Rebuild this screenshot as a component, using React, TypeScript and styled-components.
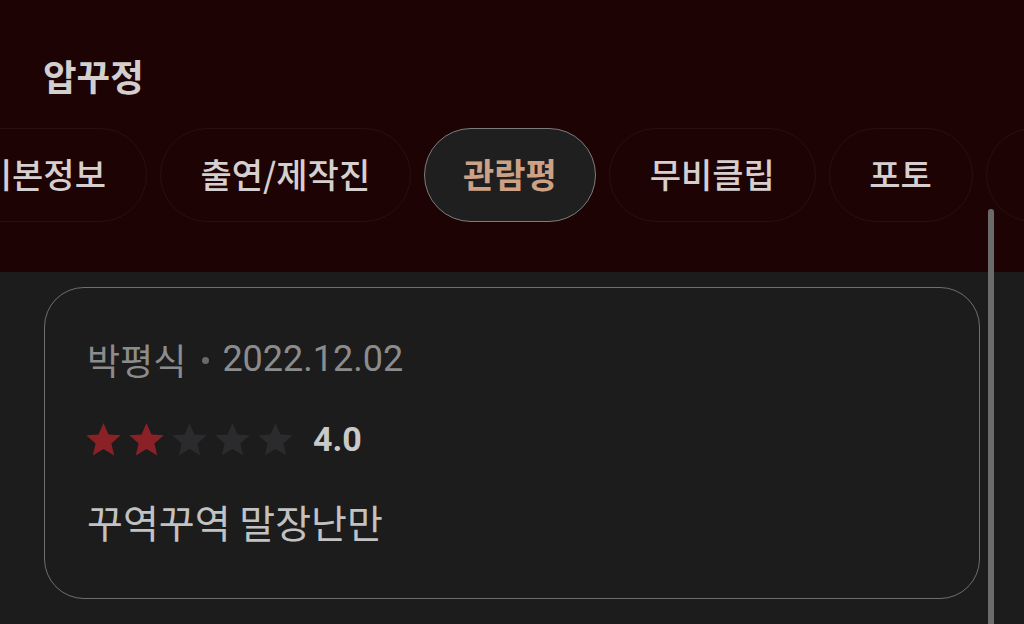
import styled, { createGlobalStyle } from 'styled-components'

const GlobalStyle = createGlobalStyle`
  html, body {
    margin: 0;
    padding: 0;
    background: #1c1c1c;
    overflow: hidden;
  }
  body {
    font-family: Roboto, 'Noto Sans CJK KR', sans-serif;
  }
`

const Page = styled.div({
  position: 'relative',
  width: '1024px',
  height: '624px',
  overflow: 'hidden',
  background: '#1c1c1c',
})

const Header = styled.div({
  background: '#1d0303',
  padding: '54px 0 50px',
  display: 'flex',
  flexDirection: 'column',
  gap: '31px',
})

const Title = styled.div({
  paddingLeft: '43px',
  fontSize: '36.5px',
  lineHeight: '43px',
  fontWeight: 700,
  color: '#d3cfcf',
  fontFamily: "'Noto Sans CJK KR', sans-serif",
})

const TabStrip = styled.div({
  display: 'flex',
  gap: '13px',
  marginLeft: '-60px',
  whiteSpace: 'nowrap',
})

const Tab = styled.div<{ $active?: boolean }>(({ $active }) => ({
  flex: 'none',
  height: '94px',
  boxSizing: 'border-box',
  padding: $active ? '0 38px 3px' : '0 39.8px 3px',
  borderRadius: '47px',
  display: 'flex',
  alignItems: 'center',
  fontSize: '34px',
  fontWeight: $active ? 700 : 500,
  fontFamily: "'Noto Sans CJK KR', sans-serif",
  color: $active ? '#cca185' : '#d6cfcf',
  background: $active ? '#1f1f1f' : 'transparent',
  border: $active ? '1.5px solid #7c7c7c' : '1px solid #2b0f0f',
}))

const Body = styled.div({
  padding: '15px 0 0 44px',
})

const Card = styled.div({
  width: '936px',
  height: '312px',
  boxSizing: 'border-box',
  border: '1px solid #6e6e6e',
  borderRadius: '40px',
  padding: '46px 42px 0',
  display: 'flex',
  flexDirection: 'column',
})

const Meta = styled.div({
  display: 'flex',
  alignItems: 'center',
  height: '50px',
  fontSize: '36px',
  color: '#8c8c8c',
})

const Dot = styled.span({
  width: '7px',
  height: '7px',
  borderRadius: '50%',
  background: '#6a6a6a',
  margin: '2px 13px 0 16px',
})

const RatingRow = styled.div({
  display: 'flex',
  alignItems: 'center',
  height: '40px',
  marginTop: '35px',
})

const Stars = styled.div({
  display: 'flex',
  gap: '4px',
  marginLeft: '-3px',
})

const Score = styled.span({
  marginLeft: '18px',
  fontSize: '34px',
  fontWeight: 700,
  color: '#c9c9c9',
})

const Comment = styled.div({
  marginTop: '37px',
  height: '50px',
  display: 'flex',
  alignItems: 'center',
  fontSize: '39px',
  color: '#c2c2c2',
  fontFamily: "'Noto Sans CJK KR', sans-serif",
})

const ScrollThumb = styled.div({
  position: 'absolute',
  left: '988px',
  top: '209px',
  width: '6px',
  height: '430px',
  borderRadius: '3px',
  background: '#6b6b6b',
})

const Star = ({ on }: { on: boolean }) => (
  <svg width='39' height='39' viewBox='0 0 24 24'>
    <path
      d='M12 1.8l3.05 7.05 7.55.6-5.75 4.95 1.75 7.4L12 17.85 5.4 21.8l1.75-7.4L1.4 9.45l7.55-.6z'
      fill={on ? '#8a2127' : '#2b2b2d'}
    />
  </svg>
)

const tabs = ['기본정보', '출연/제작진', '관람평', '무비클립', '포토', '평점']

export default function App() {
  return (
    <Page>
      <GlobalStyle />
      <Header>
        <Title>압꾸정</Title>
        <TabStrip>
          {tabs.map((t) => (
            <Tab key={t} $active={t === '관람평'}>
              {t}
            </Tab>
          ))}
        </TabStrip>
      </Header>
      <Body>
        <Card>
          <Meta>
            박평식
            <Dot />
            2022.12.02
          </Meta>
          <RatingRow>
            <Stars>
              {[0, 1, 2, 3, 4].map((i) => (
                <Star key={i} on={i < 2} />
              ))}
            </Stars>
            <Score>4.0</Score>
          </RatingRow>
          <Comment>꾸역꾸역 말장난만</Comment>
        </Card>
      </Body>
      <ScrollThumb />
    </Page>
  )
}
